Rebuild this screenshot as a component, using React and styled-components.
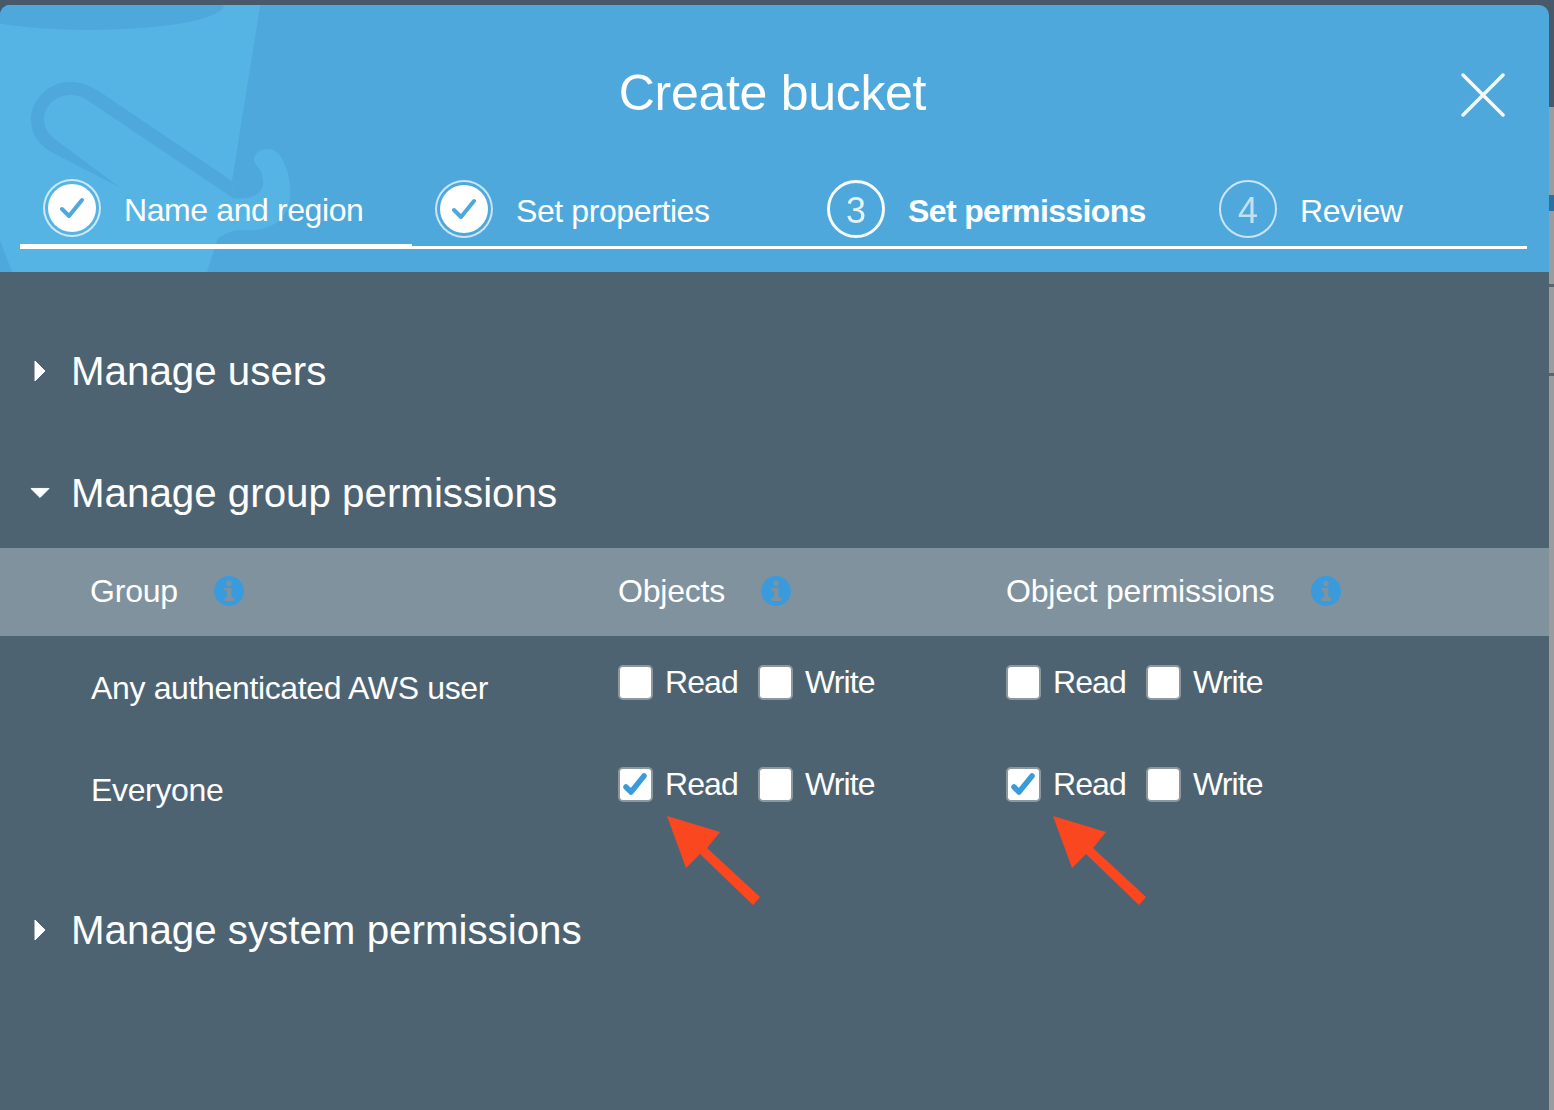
import React from 'react';
import styled, { createGlobalStyle } from 'styled-components';

const colors = {
  backdrop: '#47596a',
  header: '#4ea8dc',
  body: '#4e6372',
  band: '#80929e',
  bucket: '#55b4e4',
  info: '#3a9bdc',
  arrow: '#fb4720',
};

const GlobalStyle = createGlobalStyle`
  html, body {
    margin: 0;
    padding: 0;
    width: 1554px;
    height: 1110px;
    overflow: hidden;
    background: #9a9da0;
    font-family: "Liberation Sans", Arial, sans-serif;
  }
`;

const Page = styled.div`
  width: 1554px;
  height: 1110px;
  box-sizing: border-box;
  padding: 5px 5px 0 0;
  background: linear-gradient(
    ${colors.backdrop} 107px,
    #9a9da0 107px,
    #9a9da0 195px,
    #2f6f9f 195px,
    #2f6f9f 211px,
    #9a9da0 211px,
    #9a9da0 284px,
    #5a646c 284px,
    #5a646c 287px,
    #9a9da0 287px,
    #9a9da0 373px,
    #5a646c 373px,
    #5a646c 376px,
    #9a9da0 376px
  );
`;

const Modal = styled.div`
  height: 1105px;
  display: flex;
  flex-direction: column;
  background: ${colors.body};
  border-radius: 10px 10px 0 0;
  overflow: hidden;
`;

const Header = styled.header`
  position: relative;
  height: 267px;
  flex: none;
  background: ${colors.header};
  overflow: hidden;
`;

const BucketArt = styled.svg`
  position: absolute;
  left: 0;
  top: -5px;
`;

const Title = styled.h1`
  position: relative;
  margin: 0;
  padding: 58px 4px 0 0;
  height: 60px;
  text-align: center;
  font-size: 50px;
  line-height: 60px;
  font-weight: 400;
  color: #fff;
  letter-spacing: -0.3px;
`;

const CloseIcon = styled.svg`
  position: absolute;
  right: 44px;
  top: 68px;
`;

const Steps = styled.div`
  position: relative;
  display: grid;
  grid-template-columns: 392px 392px 392px 331px;
  margin: 56px 0 0 20px;
  height: 70px;
`;

const Step = styled.div`
  display: flex;
  align-items: center;
  box-sizing: border-box;
  height: 70px;
  padding: 0 0 7px 23px;
  gap: 23px;
  border-bottom: ${p => (p.$first ? '5px' : '3px')} solid #fff;
  margin-bottom: ${p => (p.$first ? '-1px' : '0')};
`;

const StepCircle = styled.span`
  width: 58px;
  height: 58px;
  flex: none;
  box-sizing: border-box;
  border-radius: 50%;
  display: flex;
  align-items: center;
  justify-content: center;
  padding-top: 3px;
  border: ${p => (p.$active ? 3 : 2)}px solid rgba(255, 255, 255, ${p => (p.$active ? 0.95 : 0.7)});
  color: rgba(255, 255, 255, ${p => (p.$active ? 0.85 : 0.65)});
  font-size: 36px;
  filter: blur(0.5px);
  ${p => p.$done && `
    padding: 3px;
    background: #fff;
    background-clip: content-box;
    border-color: rgba(255, 255, 255, 0.7);
  `}
`;

const StepLabel = styled.span`
  padding-top: 4px;
  font-size: 32px;
  line-height: 40px;
  color: #fff;
  letter-spacing: ${p => (p.$active ? '-0.63px' : '-0.4px')};
  font-weight: ${p => (p.$active ? 700 : 400)};
`;

const Content = styled.main`
  flex: 1;
  padding-top: 69px;
`;

const Section = styled.div`
  display: flex;
  align-items: center;
  height: 60px;
  padding-left: 30px;
  margin-top: ${p => p.$top || 0}px;
  margin-bottom: ${p => p.$gap || 0}px;
`;

const Caret = styled.span`
  width: 20px;
  display: flex;
  justify-content: center;
  margin-right: 21px;
`;

const SectionTitle = styled.h2`
  margin: 2px 0 0;
  font-size: 40.300px;
  line-height: 60px;
  font-weight: 400;
  color: #fff;
`;

const Table = styled.div`
  margin-top: 25px;
`;

const Row = styled.div`
  display: grid;
  grid-template-columns: 527px 388px 1fr;
  align-items: center;
  box-sizing: border-box;
  height: ${p => (p.$head ? 88 : 102)}px;
  padding-left: 91px;
  padding-bottom: ${p => (p.$head ? 2 : 0)}px;
  background: ${p => (p.$head ? colors.band : 'transparent')};
`;

const Cell = styled.div`
  display: flex;
  align-items: center;
  font-size: 32px;
  color: #fff;
  letter-spacing: -0.2px;
`;

const GroupHead = styled(Cell)`
  margin-left: -1px;
`;

const GroupName = styled(Cell)`
  padding-top: 2px;
  letter-spacing: -0.35px;
`;

const HeadLabel = styled.span`
  margin-right: 36px;
`;

const Checks = styled.div`
  position: relative;
  display: flex;
  align-items: center;
  padding-bottom: 10px;
`;

const CheckItem = styled.label`
  width: 140px;
  flex: none;
  display: flex;
  align-items: center;
  gap: 12px;
  font-size: 32px;
  letter-spacing: -0.9px;
  color: #fff;
`;

const Box = styled.span`
  width: 35px;
  height: 35px;
  box-sizing: border-box;
  display: flex;
  align-items: center;
  justify-content: center;
  background: #fff;
  border: 2px solid #8c979e;
  border-radius: 5px;
`;

const Arrow = styled.svg`
  position: absolute;
  left: ${p => p.$left}px;
  top: 50px;
  pointer-events: none;
`;

function InfoIcon() {
  return (
    <svg width="30" height="30" viewBox="0 0 30 30">
      <circle cx="15" cy="15" r="15" fill={colors.info} />
      <circle cx="15" cy="7.500" r="2.800" fill={colors.band} />
      <path d="M10.500 12h7v9.500h2.500V25H10.500v-3.500H13V15h-2.500z" fill={colors.band} />
    </svg>
  );
}

function CheckGroup({ read, arrowLeft }) {
  return (
    <Checks>
      <CheckItem>
        <Box>
          {read && (
            <svg width="27" height="25" viewBox="0 0 27 25">
              <path d="M4 15l5 5L22 4" fill="none" stroke={colors.info} strokeWidth="5.500" strokeLinecap="round" strokeLinejoin="round" />
            </svg>
          )}
        </Box>
        Read
      </CheckItem>
      <CheckItem>
        <Box />
        Write
      </CheckItem>
      {read && (
        <Arrow $left={arrowLeft} width="94" height="90" viewBox="0 0 94 90">
          <path d="M0 0L53 16 40 32 93 81 86 89 33 38 19 52z" fill={colors.arrow} />
        </Arrow>
      )}
    </Checks>
  );
}

const steps = [
  { label: 'Name and region', done: true },
  { label: 'Set properties', done: true },
  { label: 'Set permissions', number: 3, active: true },
  { label: 'Review', number: 4 },
];

function CaretRight() {
  return (
    <svg width="12" height="22" viewBox="0 0 12 22">
      <path d="M1 1l10 10L1 21z" fill="#fff" stroke="#fff" strokeLinejoin="round" />
    </svg>
  );
}

function CaretDown() {
  return (
    <svg width="22" height="12" viewBox="0 0 22 12">
      <path d="M1 1h20L11 11z" fill="#fff" stroke="#fff" strokeLinejoin="round" />
    </svg>
  );
}

export default function App() {
  return (
    <Page>
      <GlobalStyle />
      <Modal>
        <Header>
          <BucketArt width="300" height="272" viewBox="0 0 300 272">
            <path d="M0 0H261L232 181 233 198C250 200 265 195 263 180C262 168 254 165 254 160C254 150 268 145 278 153C290 168 292 190 289 205C282 225 265 232 240 230C232 230 225 234 218 238L207 272H12L0 240Z" fill={colors.bucket} />
            <ellipse cx="90" cy="5" rx="134" ry="25" fill={colors.header} />
            <path d="M232 181L97 90C87 84 78 82 70 82C48 82 31 100 31 120C31 135 40 146 53 153L120 187.500L56 140C48 134 44 128 44 120C44 106 56 95 70 95C77 95 83 97 87 100L233 198Z" fill={colors.header} />
          </BucketArt>
          <Title>Create bucket</Title>
          <CloseIcon width="44" height="44" viewBox="0 0 44 44">
            <path d="M2 2l40 40M42 2L2 42" stroke="#fff" strokeWidth="3.500" strokeLinecap="round" opacity="0.95" />
          </CloseIcon>
          <Steps>
            {steps.map((s, i) => (
              <Step key={s.label} $first={i === 0}>
                <StepCircle $done={s.done} $active={s.active}>
                  {s.done ? (
                    <svg width="24" height="22" viewBox="0 0 24 22">
                      <path d="M2 12l7 7L22 3" fill="none" stroke={colors.header} strokeWidth="4" strokeLinecap="round" strokeLinejoin="round" />
                    </svg>
                  ) : s.number}
                </StepCircle>
                <StepLabel $active={s.active}>{s.label}</StepLabel>
              </Step>
            ))}
          </Steps>
        </Header>
        <Content>
          <Section $gap={62}>
            <Caret><CaretRight /></Caret>
            <SectionTitle>Manage users</SectionTitle>
          </Section>
          <Section>
            <Caret><CaretDown /></Caret>
            <SectionTitle>Manage group permissions</SectionTitle>
          </Section>
          <Table>
            <Row $head>
              <GroupHead><HeadLabel>Group</HeadLabel><InfoIcon /></GroupHead>
              <Cell><HeadLabel>Objects</HeadLabel><InfoIcon /></Cell>
              <Cell><HeadLabel>Object permissions</HeadLabel><InfoIcon /></Cell>
            </Row>
            <Row>
              <GroupName>Any authenticated AWS user</GroupName>
              <CheckGroup />
              <CheckGroup />
            </Row>
            <Row>
              <GroupName>Everyone</GroupName>
              <CheckGroup read arrowLeft={49} />
              <CheckGroup read arrowLeft={47} />
            </Row>
          </Table>
          <Section $top={60}>
            <Caret><CaretRight /></Caret>
            <SectionTitle>Manage system permissions</SectionTitle>
          </Section>
        </Content>
      </Modal>
    </Page>
  );
}
